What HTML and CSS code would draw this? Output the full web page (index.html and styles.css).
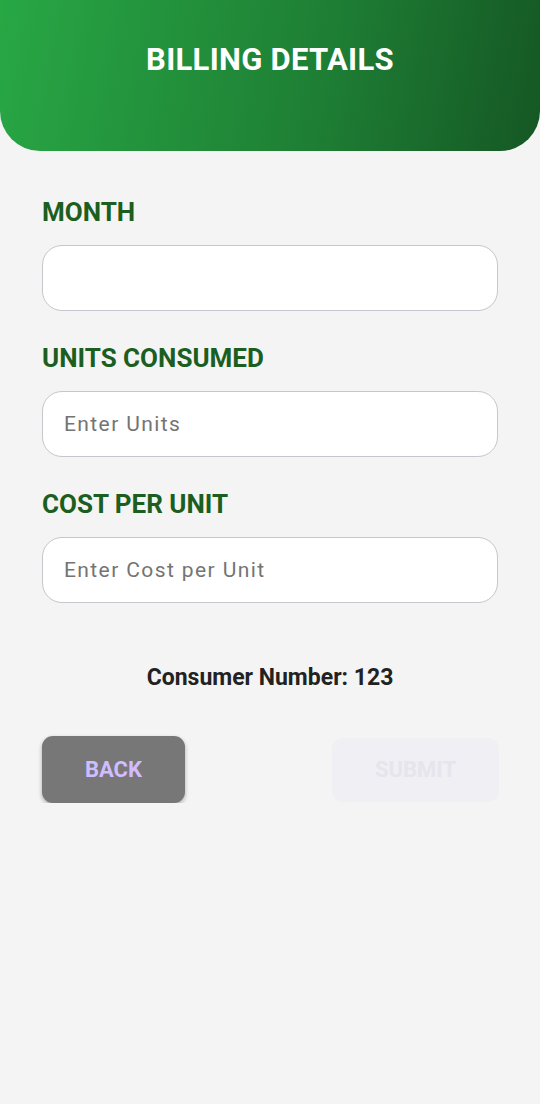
FILE: index.html
```html
<!DOCTYPE html>
<html>
<head>
<meta charset="utf-8">
<link rel="stylesheet" href="styles.css">
</head>
<body>
<header class="header">
  <h1 class="title">BILLING DETAILS</h1>
</header>
<main class="form">
  <div class="field">
    <label class="label">MONTH</label>
    <div class="input"></div>
  </div>
  <div class="field">
    <label class="label">UNITS CONSUMED</label>
    <div class="input"><span class="placeholder">Enter Units</span></div>
  </div>
  <div class="field">
    <label class="label">COST PER UNIT</label>
    <div class="input"><span class="placeholder">Enter Cost per Unit</span></div>
  </div>
  <p class="consumer">Consumer Number: 123</p>
  <div class="actions">
    <button class="btn back">BACK</button>
    <button class="btn submit">SUBMIT</button>
  </div>
</main>
</body>
</html>
```
FILE: styles.css
```css
html, body {
  margin: 0;
  padding: 0;
  background: #f4f4f4;
  font-family: Roboto, "Noto Sans", sans-serif;
}
.header {
  height: 151px;
  background: linear-gradient(100deg, #28a745 0%, #1e7e34 60%, #155724 100%);
  border-radius: 0 0 40px 40px;
  display: flex;
  justify-content: center;
  box-sizing: border-box;
  padding-top: 40px;
}
.title {
  margin: 0;
  color: #fff;
  font-size: 31px;
  font-weight: 700;
  line-height: 40px;
  letter-spacing: 0.3px;
  height: 40px;
}
.form {
  padding: 0 42px;
  display: flex;
  flex-direction: column;
}
.field {
  display: flex;
  flex-direction: column;
}
.label {
  color: #1b5e20;
  font-size: 26px;
  font-weight: 700;
  line-height: 32px;
  margin-top: 45px;
  margin-bottom: 17px;
}
.field + .field .label { margin-top: 31px; }
.input {
  height: 66px;
  background: #fff;
  border: 1px solid #c6c6cc;
  border-radius: 20px;
  box-sizing: border-box;
  display: flex;
  align-items: center;
  padding-left: 21px;
}
.placeholder {
  color: #747474;
  font-size: 21px;
  letter-spacing: 1.4px;
}
.consumer {
  margin: 61px 0 0;
  text-align: center;
  font-size: 23px;
  font-weight: 700;
  color: #222;
  line-height: 28px;
}
.actions {
  display: flex;
  justify-content: space-between;
  align-items: center;
  margin-top: 44px;
}
.btn {
  border: none;
  font-family: Roboto, sans-serif;
  font-weight: 700;
  font-size: 22px;
  border-radius: 11px;
}
.back {
  width: 143px;
  height: 67px;
  background: #777;
  color: #d0bcff;
  box-shadow: 0 2px 4px rgba(0,0,0,0.3);
}
.submit {
  width: 167px;
  height: 64px;
  margin-right: -1px;
  background: #f0eff3;
  color: #e6e4ec;
}
```
